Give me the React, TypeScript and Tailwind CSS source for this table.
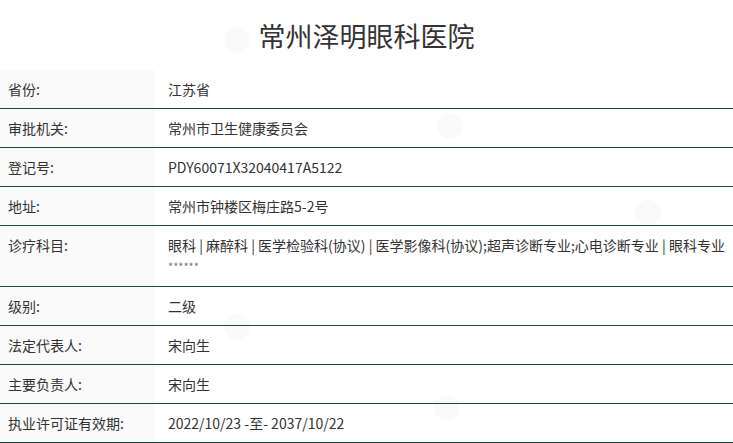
import React from "react";

const rows: { label: string; value: React.ReactNode }[] = [
  { label: "省份:", value: "江苏省" },
  { label: "审批机关:", value: "常州市卫生健康委员会" },
  { label: "登记号:", value: "PDY60071X32040417A5122" },
  { label: "地址:", value: "常州市钟楼区梅庄路5-2号" },
  {
    label: "诊疗科目:",
    value: (
      <>
        <span className="block whitespace-nowrap">眼科 | 麻醉科 | 医学检验科(协议) | 医学影像科(协议);超声诊断专业;心电诊断专业 | 眼科专业</span>
        <span className="block text-[11px] leading-[22px] text-[#777]">******</span>
      </>
    ),
  },
  { label: "级别:", value: "二级" },
  { label: "法定代表人:", value: "宋向生" },
  { label: "主要负责人:", value: "宋向生" },
  { label: "执业许可证有效期:", value: "2022/10/23 -至- 2037/10/22" },
];

function Mark({ x, y }: { x: number; y: number }) {
  return (
    <div
      className="pointer-events-none absolute h-[26px] w-[26px] rounded-full bg-black/[0.02]"
      style={{ left: x - 13, top: y - 13 }}
    />
  );
}

export default function App() {
  return (
    <div
      className="relative h-[443px] w-[733px] overflow-hidden bg-white text-[#333]"
      style={{ fontFamily: '"Noto Sans CJK SC", "Noto Sans", sans-serif' }}
    >
      <div className="flex h-[70px] items-center justify-center">
        <h1 className="text-[27px] font-normal leading-none text-[#333]">常州泽明眼科医院</h1>
      </div>
      <div className="flex flex-col">
        {rows.map((r) => (
          <div key={r.label} className="flex border-b border-[#1e4a3a]">
            <div className="w-[155px] shrink-0 bg-[#fafafa] py-[9px] pl-[8px] text-[14px] leading-[20px]">
              {r.label}
            </div>
            <div className="min-w-0 flex-1 py-[9px] pl-[13px] text-[14px] leading-[20px]">{r.value}</div>
          </div>
        ))}
      </div>
      <Mark x={237} y={40} />
      <Mark x={450} y={126} />
      <Mark x={648} y={213} />
      <Mark x={237} y={327} />
      <Mark x={447} y={408} />
    </div>
  );
}
